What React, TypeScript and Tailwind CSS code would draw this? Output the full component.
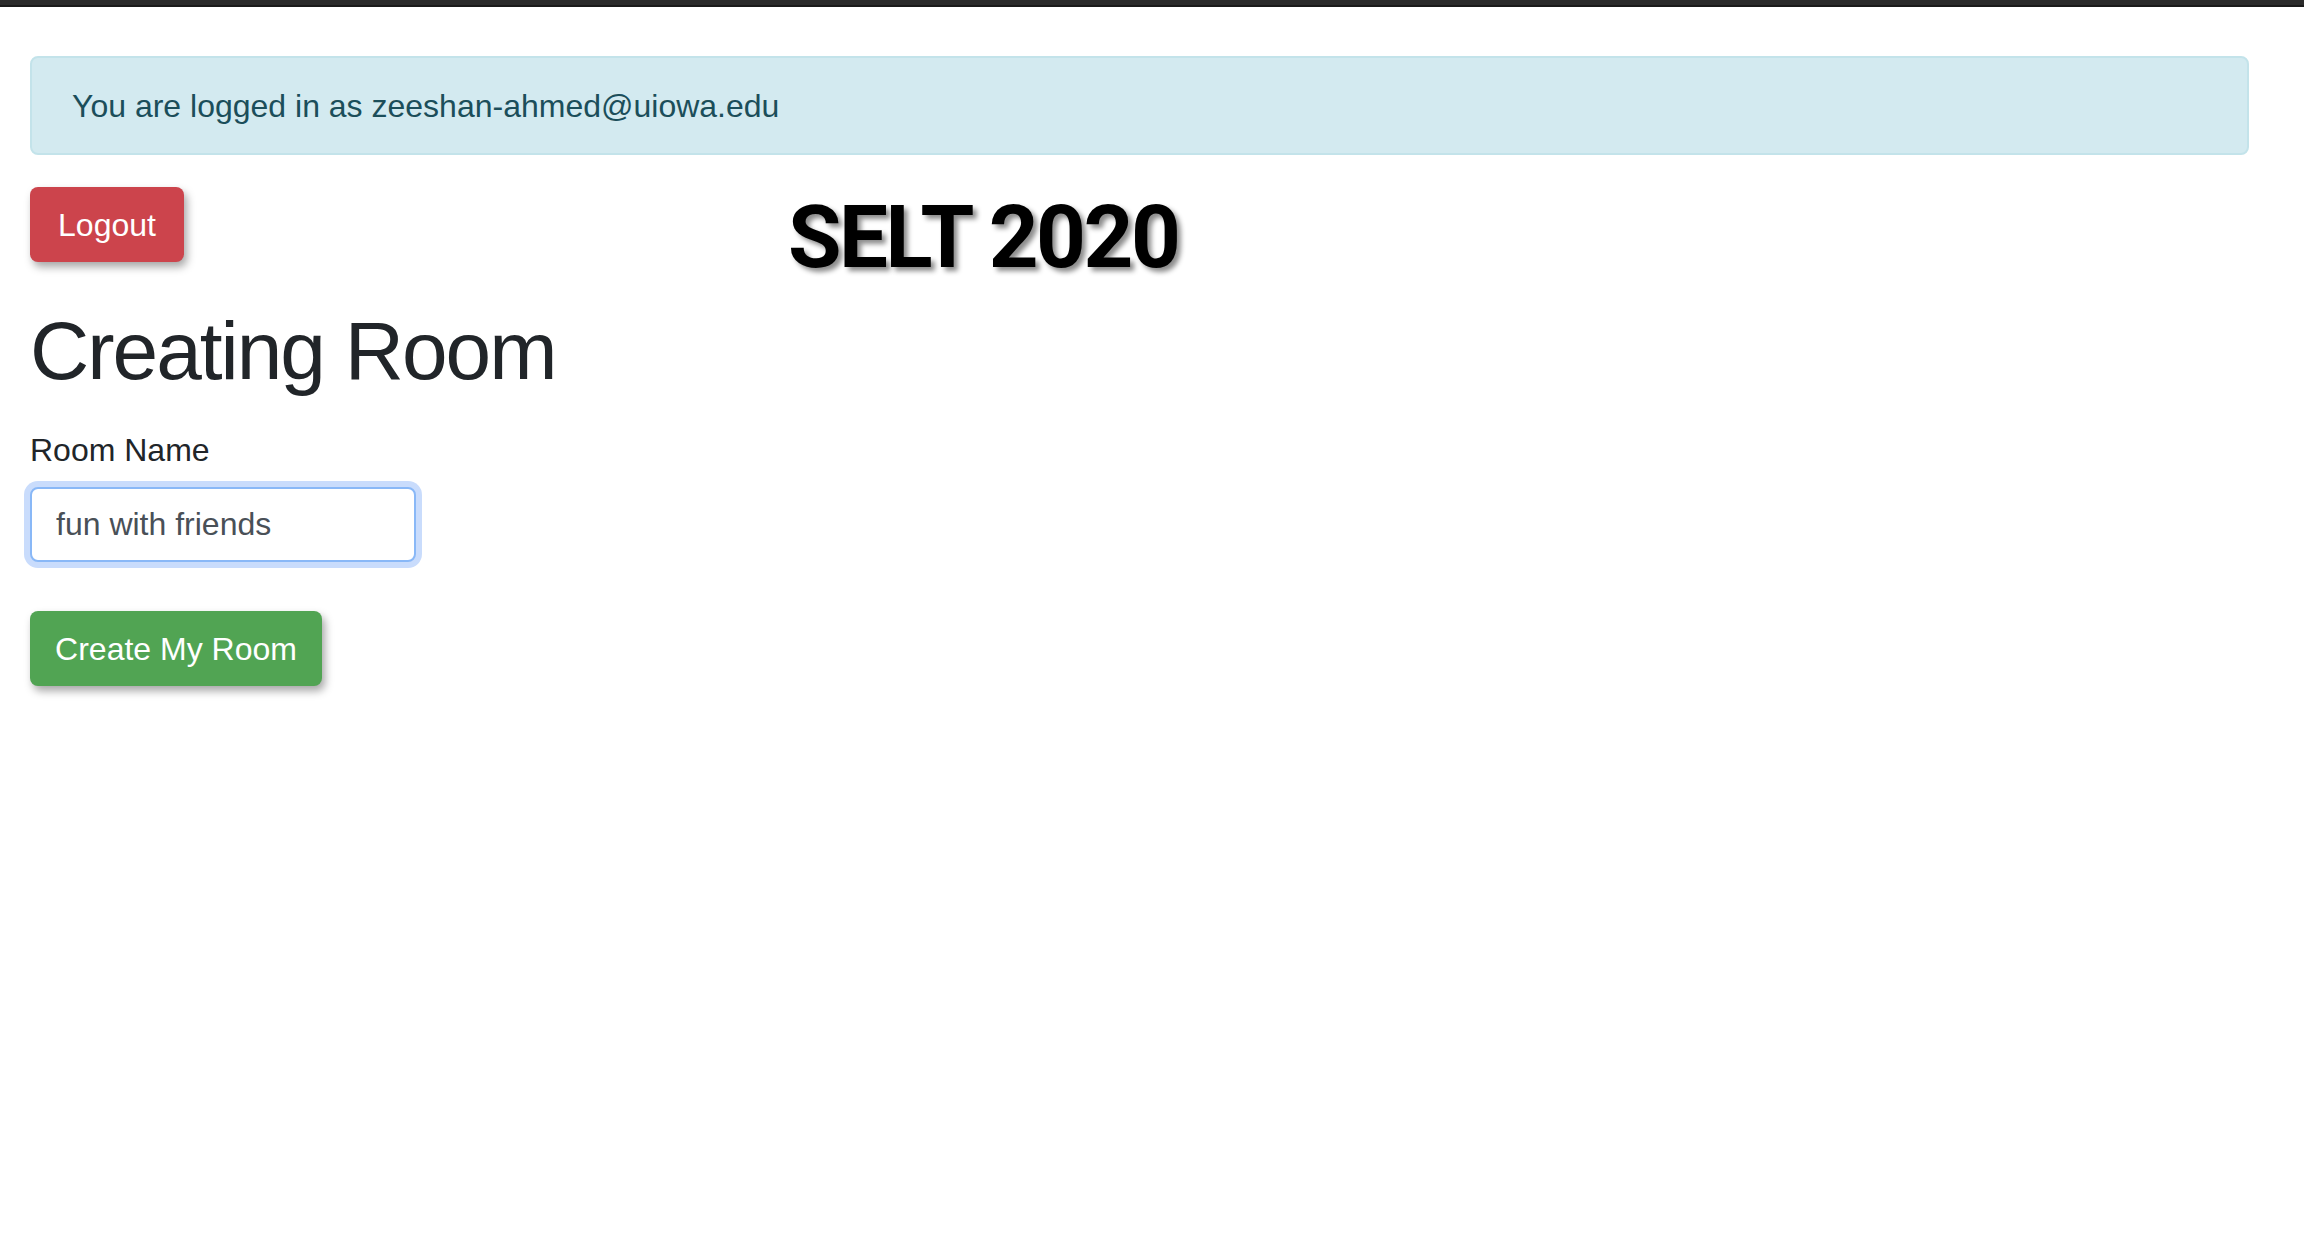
import React, { useState } from 'react';

const font = { fontFamily: '"Liberation Sans", Arial, sans-serif' };

export default function App() {
    const [roomName, setRoomName] = useState('fun with friends');

    return (
        <div className="min-h-screen bg-white text-[#212529]" style={font}>
            {/* top strip */}
            <div className="h-[7px] bg-[#2b2b2b] border-b-2 border-[#1a1a1a]" />

            <div className="pl-[30px]">
                {/* Logged in alert */}
                <div className="mt-[49px] w-[2219px] h-[99px] flex items-center pl-[40px] bg-[#d3eaf0] border-2 border-[#c3e3ea] rounded-lg text-[#1b4e5a] text-[32px]">
                    You are logged in as zeeshan-ahmed@uiowa.edu
                </div>

                {/* Logout + title */}
                <div className="flex items-start mt-[32px]">
                    <button className="w-[154px] h-[75px] rounded-lg bg-[#cc444c] text-white text-[32px] shadow-[3px_5px_8px_rgba(0,0,0,0.35)]">
                        Logout
                    </button>
                    <h1
                        className="ml-[604px] mt-[7px] text-[87px] leading-none font-bold text-black tracking-[-2.5px] [text-shadow:4px_4px_5px_rgba(0,0,0,0.45)]"
                        style={{ fontFamily: 'Roboto, "Liberation Sans", sans-serif' }}
                    >
                        SELT 2020
                    </h1>
                </div>

                <h2 className="mt-[21px] text-[82px] leading-[1.2] tracking-[-2px] text-[#212529]">
                    Creating Room
                </h2>

                {/* Form */}
                <label className="block mt-[26px] text-[32px] leading-[1.5] text-[#212529]">Room Name</label>
                <input
                    value={roomName}
                    onChange={(e) => setRoomName(e.target.value)}
                    className="block mt-[13px] w-[386px] h-[75px] px-[24px] rounded-lg border-2 border-[#89b8f7] ring-[6px] ring-[#c9dcfc] outline-none text-[32px] text-[#495057] bg-white"
                    style={font}
                />

                <button className="block mt-[49px] w-[292px] h-[75px] rounded-lg bg-[#51a453] text-white text-[32px] shadow-[3px_5px_8px_rgba(0,0,0,0.35)]">
                    Create My Room
                </button>
            </div>
        </div>
    );
}
